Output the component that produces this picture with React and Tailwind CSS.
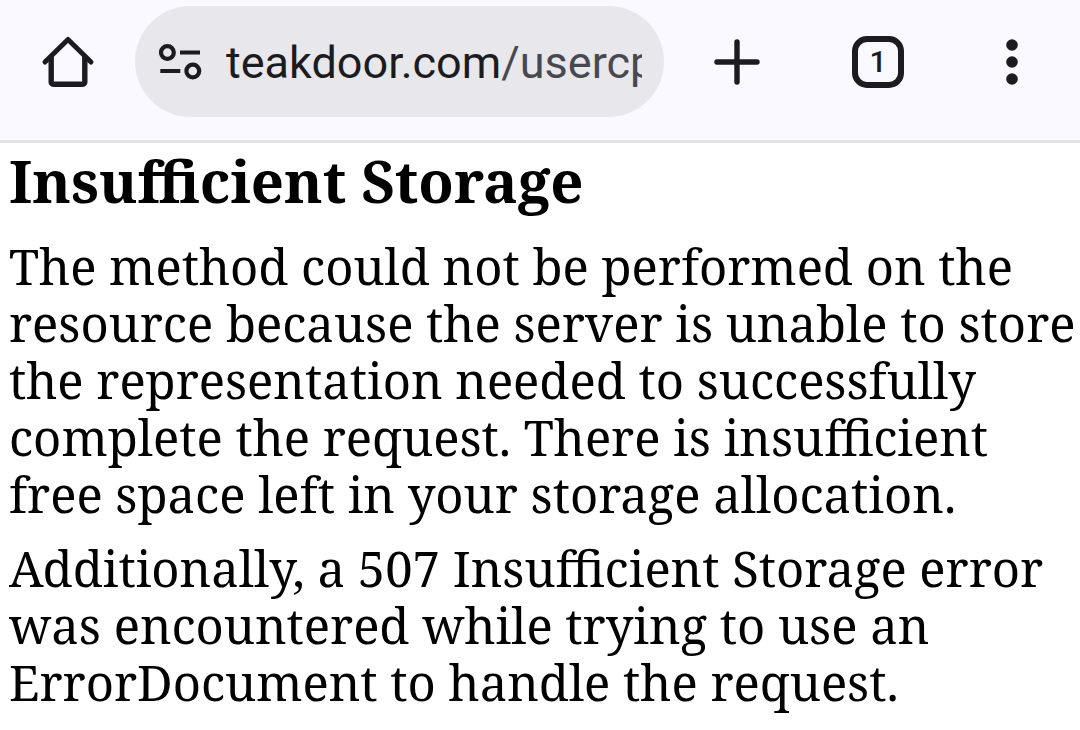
import React from 'react';

const paragraphs = [
  'The method could not be performed on the resource because the server is unable to store the representation needed to successfully complete the request. There is insufficient free space left in your storage allocation.',
  'Additionally, a 507 Insufficient Storage error was encountered while trying to use an ErrorDocument to handle the request.',
];

function Toolbar() {
  return (
    <header className="flex items-center border-b-[3px] border-[#e3e3e7] bg-[#faf9ff] pt-[6px] pb-[23px] text-[#1c1b20]">
      <button aria-label="Home" className="ml-10 flex size-14 shrink-0 items-center justify-center">
        <svg width="56" height="56" viewBox="0 0 56 56" fill="none" stroke="currentColor" strokeWidth="5.4" strokeLinecap="round" strokeLinejoin="round">
          <path strokeWidth="5" d="M5 28 28 5.5 51 28" />
          <path d="M11.2 23.5V48.2a2 2 0 0 0 2 2h29.6a2 2 0 0 0 2-2V23.5" />
        </svg>
      </button>
      <div className="ml-[39px] flex h-[111px] min-w-0 flex-1 items-center rounded-full bg-[#e8e7ec] pr-[22px] pl-6">
        <button aria-label="Site information" className="shrink-0">
          <svg width="44" height="40" viewBox="0 0 44 40" fill="none" stroke="currentColor" strokeWidth="4.2">
            <circle cx="8.4" cy="10.5" r="6.4" />
            <path d="M21 10.5h20M1.3 29h20" />
            <circle cx="33.8" cy="29" r="6.4" />
          </svg>
        </button>
        <a href="#usercp" className="ml-[23px] min-w-0 flex-1 overflow-hidden pt-[2px] font-['Roboto',sans-serif] text-[45px] leading-[60px] whitespace-nowrap">
          teakdoor.com<span className="text-[#474850]">/usercp</span>
        </a>
      </div>
      <button aria-label="New tab" className="ml-[45px] flex size-14 shrink-0 items-center justify-center">
        <svg width="56" height="56" viewBox="0 0 56 56" stroke="currentColor" strokeWidth="5.4" strokeLinecap="round">
          <path d="M8 28h40M28 8v40" />
        </svg>
      </button>
      <button aria-label="Tabs" className="ml-[85px] flex size-14 shrink-0 items-center justify-center">
        <span className="flex size-[52px] items-center justify-center rounded-[15px] border-[6px] border-current font-['Roboto',sans-serif] text-[30px] leading-none font-medium">
          1
        </span>
      </button>
      <button aria-label="More" className="mr-10 ml-[78px] flex size-14 shrink-0 items-center justify-center">
        <svg width="56" height="56" viewBox="0 0 56 56" fill="currentColor">
          <circle cx="28" cy="11" r="5.8" />
          <circle cx="28" cy="28" r="5.8" />
          <circle cx="28" cy="45" r="5.8" />
        </svg>
      </button>
    </header>
  );
}

export default function App() {
  return (
    <div className="min-h-screen bg-white text-black">
      <Toolbar />
      <main className="pt-[5px] pr-1 pl-[9px] font-['Noto_Serif','DejaVu_Serif',serif]">
        <h1 className="mb-6 text-[58px] leading-[66px] font-bold">Insufficient Storage</h1>
        {paragraphs.map((text) => (
          <p key={text} className="mb-[17px] text-[49px] leading-[57px]">
            {text}
          </p>
        ))}
      </main>
    </div>
  );
}
